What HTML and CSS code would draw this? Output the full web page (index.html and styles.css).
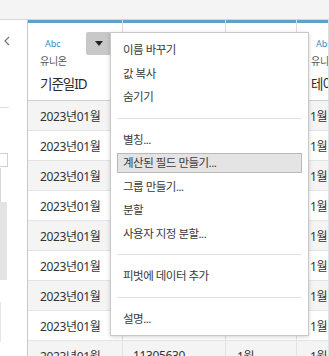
FILE: index.html
```html
<!DOCTYPE html>
<html lang="ko">
<head>
<meta charset="utf-8">
<link rel="stylesheet" href="styles.css">
</head>
<body>
<div class="topbar"></div>
<div class="main">
  <aside class="side">
    <div class="chev"><svg width="8" height="10" viewBox="0 0 8 10"><path d="M6 1 L2 5 L6 9" fill="none" stroke="#777" stroke-width="1.2"/></svg></div>
    <div class="side-line"></div>
    <div class="side-box"></div>
    <div class="side-rule"></div>
    <div class="side-fill"></div>
    <div class="side-rule2"></div>
  </aside>
  <section class="table">
    <div class="row head">
      <div class="cell hcell">
        <div class="abc">Abc</div>
        <div class="src">유니온</div>
        <div class="name">기준일ID</div>
        <div class="dd"><svg width="8" height="5" viewBox="0 0 8 5"><path d="M0 0 H8 L4 5 Z" fill="#222"/></svg></div>
      </div>
      <div class="cell hcell"></div>
      <div class="cell hcell"></div>
      <div class="cell hcell c4h">
        <div class="abc">Abc</div>
        <div class="src">유니온</div>
        <div class="name">테이블</div>
      </div>
    </div>
    <div class="row alt"><div class="cell">2023년01월</div><div class="cell c2">11305630</div><div class="cell c3">1월</div><div class="cell c4">1월</div></div>
    <div class="row"><div class="cell">2023년01월</div><div class="cell c2">11305630</div><div class="cell c3">1월</div><div class="cell c4">1월</div></div>
    <div class="row alt"><div class="cell">2023년01월</div><div class="cell c2">11305630</div><div class="cell c3">1월</div><div class="cell c4">1월</div></div>
    <div class="row"><div class="cell">2023년01월</div><div class="cell c2">11305630</div><div class="cell c3">1월</div><div class="cell c4">1월</div></div>
    <div class="row alt"><div class="cell">2023년01월</div><div class="cell c2">11305630</div><div class="cell c3">1월</div><div class="cell c4">1월</div></div>
    <div class="row"><div class="cell">2023년01월</div><div class="cell c2">11305630</div><div class="cell c3">1월</div><div class="cell c4">1월</div></div>
    <div class="row alt"><div class="cell">2023년01월</div><div class="cell c2">11305630</div><div class="cell c3">1월</div><div class="cell c4">1월</div></div>
    <div class="row"><div class="cell">2023년01월</div><div class="cell c2">11305630</div><div class="cell c3">1월</div><div class="cell c4">1월</div></div>
    <div class="row alt"><div class="cell">2023년01월</div><div class="cell c2">11305630</div><div class="cell c3">1월</div><div class="cell c4">1월</div></div>
  </section>
</div>
<div class="menu">
  <div class="item">이름 바꾸기</div>
  <div class="item">값 복사</div>
  <div class="item">숨기기</div>
  <div class="sep"></div>
  <div class="item">별칭...</div>
  <div class="item active">계산된 필드 만들기...</div>
  <div class="item">그룹 만들기...</div>
  <div class="item">분할</div>
  <div class="item">사용자 지정 분할...</div>
  <div class="sep"></div>
  <div class="item">피벗에 데이터 추가</div>
  <div class="sep"></div>
  <div class="item">설명...</div>
</div>
</body>
</html>
```
FILE: styles.css
```css
* { box-sizing: border-box; }
html, body { margin: 0; padding: 0; }
body {
  width: 329px;
  height: 356px;
  overflow: hidden;
  background: #fff;
  font-family: "Noto Sans", "Noto Sans CJK KR", sans-serif;
  color: #333;
  position: relative;
}
.topbar {
  height: 20px;
  background: #f4f4f4;
  border-bottom: 1px solid #d6d6d6;
}
.main {
  display: flex;
  height: 336px;
}
.side {
  width: 28px;
  flex: none;
  border-right: 1px solid #c9c9c9;
  display: flex;
  flex-direction: column;
}
.chev { height: 10px; margin: 16px 0 0 3px; display: flex; }
.side-line { width: 9px; height: 1px; background: #dcdcdc; margin-top: 61px; }
.side-box { width: 8px; height: 14px; border: 1px solid #d0d0d0; border-left: none; margin-top: 45px; }
.side-rule { width: 1px; height: 34px; background: #d8d8d8; margin-top: 1px; }
.side-fill { width: 7px; height: 78px; background: #e3e3e3; }
.side-rule2 { width: 1px; height: 40px; background: #e6e6e6; margin-top: 22px; }
.table {
  flex: 1;
  display: flex;
  flex-direction: column;
  overflow: hidden;
}
.row {
  display: grid;
  grid-template-columns: 95px 103px 71px 1fr;
  height: 30px;
  flex: none;
  border-bottom: 1px solid #e4e4e4;
  font-size: 12px;
  letter-spacing: -0.35px;
}
.row.alt { background: #f4f4f4; }
.cell {
  border-right: 1px solid #e2e2e2;
  padding-left: 12px;
  display: flex;
  align-items: center;
  white-space: nowrap;
  overflow: hidden;
}
.c2 { padding-left: 10px; }
.c3 { padding-left: 11px; }
.c4 { padding-left: 13px; }
.row.head {
  height: 81px;
  border-bottom: 1px solid #cfcfcf;
  background: #fff;
}
.hcell {
  box-shadow: inset 0 3px 0 #5fa2c9;
  display: block;
  position: relative;
  padding-top: 18px;
  border-right-color: #dedede;
}
.abc {
  font-size: 9px;
  line-height: 12px;
  color: #3b8dbd;
  padding-left: 5px;
  letter-spacing: 0;
}
.src {
  font-size: 10px;
  line-height: 14px;
  color: #555;
  margin-top: 4px;
  letter-spacing: -0.3px;
}
.name {
  font-size: 13.5px;
  line-height: 18px;
  color: #2b2b2b;
  margin-top: 7px;
  letter-spacing: -1px;
}
.c4h { padding-left: 14px; }
.dd {
  position: absolute;
  left: 58px;
  top: 12px;
  width: 25px;
  height: 23px;
  background: #c8c8c8;
  border-radius: 2px;
  display: flex;
  align-items: center;
  justify-content: center;
}
.menu {
  position: absolute;
  left: 110px;
  top: 32px;
  width: 199px;
  height: 304px;
  background: #fff;
  border: 1px solid #c9c9c9;
  box-shadow: 0 1px 4px rgba(0,0,0,0.18);
  padding: 5px 6px 0 6px;
  font-size: 11.5px;
  letter-spacing: -0.5px;
  color: #3a3a3a;
  display: flex;
  flex-direction: column;
}
.item {
  flex: none;
  height: 20px;
  line-height: 18px;
  margin: 2px 0 1.5px 0;
  padding-left: 5px;
  border: 1px solid transparent;
  white-space: nowrap;
}
.item.active {
  background: #e4e4e4;
  border-color: #b9b9b9;
}
.sep {
  flex: none;
  height: 1px;
  background: #e2e2e2;
  margin: 9px 0;
}
```
